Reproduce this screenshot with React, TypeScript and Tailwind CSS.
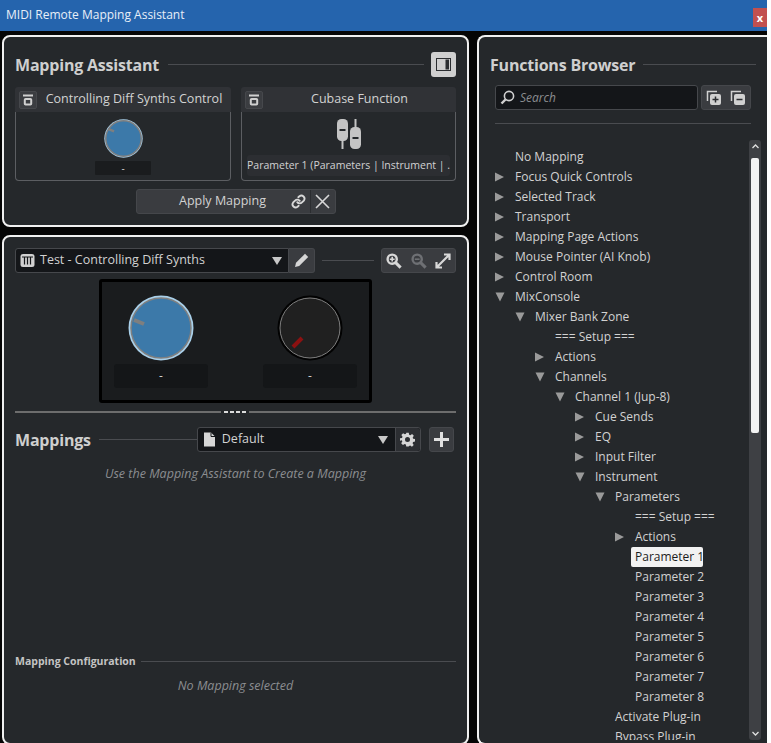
import React from "react";

type Row = { t: string; l: number; a?: "r" | "d"; s?: boolean };
const rows: Row[] = [
  { t: "No Mapping", l: 0 },
  { t: "Focus Quick Controls", l: 0, a: "r" },
  { t: "Selected Track", l: 0, a: "r" },
  { t: "Transport", l: 0, a: "r" },
  { t: "Mapping Page Actions", l: 0, a: "r" },
  { t: "Mouse Pointer (AI Knob)", l: 0, a: "r" },
  { t: "Control Room", l: 0, a: "r" },
  { t: "MixConsole", l: 0, a: "d" },
  { t: "Mixer Bank Zone", l: 1, a: "d" },
  { t: "=== Setup ===", l: 2 },
  { t: "Actions", l: 2, a: "r" },
  { t: "Channels", l: 2, a: "d" },
  { t: "Channel 1 (Jup-8)", l: 3, a: "d" },
  { t: "Cue Sends", l: 4, a: "r" },
  { t: "EQ", l: 4, a: "r" },
  { t: "Input Filter", l: 4, a: "r" },
  { t: "Instrument", l: 4, a: "d" },
  { t: "Parameters", l: 5, a: "d" },
  { t: "=== Setup ===", l: 6 },
  { t: "Actions", l: 6, a: "r" },
  { t: "Parameter 1", l: 6, s: true },
  { t: "Parameter 2", l: 6 },
  { t: "Parameter 3", l: 6 },
  { t: "Parameter 4", l: 6 },
  { t: "Parameter 5", l: 6 },
  { t: "Parameter 6", l: 6 },
  { t: "Parameter 7", l: 6 },
  { t: "Parameter 8", l: 6 },
  { t: "Activate Plug-in", l: 5 },
  { t: "Bypass Plug-in", l: 5 },
];

const Caret = () => (
  <svg width="10" height="8" viewBox="0 0 10 8" className="shrink-0"><path d="M0 0h10L5 8z" fill="#c8c8c8" /></svg>
);

const Rule = ({ className = "" }: { className?: string }) => <div className={"h-px bg-[#4a4c50] " + className} />;

const StoreIcon = () => (
  <div className="w-[18px] h-[18px] rounded-[2px] bg-[#3b3d41] border border-[#46484c] flex items-center justify-center shrink-0">
    <svg width="12" height="12" viewBox="0 0 12 12" fill="none">
      <path d="M1 1.5h10" stroke="#d0d0d0" strokeWidth="2" />
      <rect x="2.8" y="5" width="6.4" height="5.6" rx="0.8" stroke="#d0d0d0" strokeWidth="2" />
    </svg>
  </div>
);

const Knob = ({ size, ring, ringW, fill, mark, x1, y1, x2, y2 }: { size: number; ring: string; ringW: number; fill: string; mark: string; x1: number; y1: number; x2: number; y2: number }) => (
  <svg width={size} height={size} viewBox="0 0 66 66" className="shrink-0">
    <circle cx="33" cy="33" r="32.5" fill={ring} />
    <circle cx="33" cy="33" r={30} fill={fill} stroke="#808080" strokeWidth={ringW} />
    <line x1={x1} y1={y1} x2={x2} y2={y2} stroke={mark} strokeWidth="4" />
  </svg>
);

const Zoom = ({ color, plus }: { color: string; plus?: boolean }) => (
  <svg width="16" height="16" viewBox="0 0 16 16" fill="none">
    <circle cx="6.2" cy="6.2" r="4.6" stroke={color} strokeWidth="2.4" />
    <path d="M9.6 9.6L14.6 14.6" stroke={color} strokeWidth="3" />
    <path d={plus ? "M3.8 6.2h4.8M6.2 3.8v4.8" : "M3.8 6.2h4.8"} stroke={color} strokeWidth="1.6" />
  </svg>
);

export default function App() {
  return (
    <div className="w-[767px] h-[743px] overflow-hidden bg-[#050505] flex flex-col font-['Open_Sans',sans-serif] text-[12px] text-[#d2d2d2]">
      <div className="h-[31px] shrink-0 bg-[#2564ad] flex items-center justify-between pl-[6px]">
        <span className="text-[#e8eff8] text-[12px] leading-none mb-[1px]">MIDI Remote Mapping Assistant</span>
        <div className="w-[14px] h-[19px] mt-[4px] bg-[#c2504f] text-white font-bold text-[11px] flex items-center justify-center leading-none">x</div>
      </div>
      <div className="flex pt-[4px] pl-[2px] gap-[8px] flex-1 min-h-0">
        <div className="w-[467px] shrink-0 flex flex-col gap-[8px]">
          {/* Mapping Assistant */}
          <section className="h-[192px] shrink-0 border-2 border-[#f0f0f0] rounded-[8px] bg-[#25282b] px-[11px] pt-[15px]">
            <div className="flex items-center h-[25px]">
              <h2 className="text-[16px] font-bold text-[#cfcfcf] leading-none tracking-[-0.2px]">Mapping Assistant</h2>
              <Rule className="flex-1 ml-[9px] mr-[7px]" />
              <div className="w-[25px] h-[25px] rounded-[3px] bg-[#cfcfcf] flex items-center justify-center">
                <svg width="15" height="13" viewBox="0 0 15 13"><rect x="0.5" y="0.5" width="14" height="12" fill="none" stroke="#2b2d30" /><rect x="9.5" y="1.5" width="3.5" height="10" fill="#2b2d30" /></svg>
              </div>
            </div>
            <div className="flex gap-[10px] mt-[10px]">
              <div className="w-[216px] h-[94px] flex flex-col">
                <div className="h-[25px] bg-[#303236] rounded-t-[3px] flex items-center pl-[4px]">
                  <StoreIcon />
                  <span className="flex-1 text-center text-[12.5px] leading-none">Controlling Diff Synths Control</span>
                </div>
                <div className="flex-1 border-x border-b border-[#5c5e62] rounded-b-[4px] flex flex-col items-center pt-[7px]">
                  <Knob size={39} ring="#a9d0ea" ringW={2.5} fill="#3c79a9" mark="#7f7f7f" x1={8} y1={17} x2={17} y2={21} />
                  <div className="w-[56px] h-[14px] mt-[3px] bg-[#1a1c1e] rounded-[1px] text-center text-[10px] leading-[14px]">-</div>
                </div>
              </div>
              <div className="w-[215px] h-[94px] flex flex-col">
                <div className="h-[25px] bg-[#303236] rounded-t-[3px] flex items-center pl-[4px]">
                  <StoreIcon />
                  <span className="flex-1 text-center text-[12.5px] leading-none">Cubase Function</span>
                </div>
                <div className="flex-1 border-x border-b border-[#5c5e62] rounded-b-[4px] flex flex-col items-center pt-[7px]">
                  <svg width="26" height="31" viewBox="0 0 26 31" className="shrink-0">
                    <rect x="5.5" y="20" width="2" height="10" fill="#c4c4c4" />
                    <rect x="1" y="0" width="11" height="22" rx="4.5" fill="#c4c4c4" />
                    <rect x="3.5" y="10" width="6" height="2" fill="#25282b" />
                    <rect x="18.5" y="0" width="2" height="10" fill="#c4c4c4" />
                    <rect x="14" y="8" width="11" height="22" rx="4.5" fill="#c4c4c4" />
                    <rect x="16.5" y="18" width="6" height="2" fill="#25282b" />
                  </svg>
                  <div className="w-[203px] h-[21px] mt-[5px] bg-[#2c2e32] rounded-[3px] text-center text-[10.5px] leading-[21px] whitespace-nowrap overflow-hidden">Parameter 1 (Parameters | Instrument | .</div>
                </div>
              </div>
            </div>
            <div className="flex justify-center mt-[8px]">
              <div className="w-[200px] h-[25px] bg-[#3a3c40] border border-[#45474b] rounded-[3px] flex items-center">
                <span className="w-[151px] pl-[21px] text-center text-[12.5px] leading-none">Apply Mapping</span>
                <div className="flex-1 flex justify-center">
                  <svg width="15" height="15" viewBox="0 0 24 24" fill="none" stroke="#d8d8d8" strokeWidth="3" strokeLinecap="round"><path d="M10 13a5 5 0 0 0 7.5.5l3-3a5 5 0 0 0-7-7l-1.7 1.7" /><path d="M14 11a5 5 0 0 0-7.5-.5l-3 3a5 5 0 0 0 7 7l1.7-1.7" /></svg>
                </div>
                <div className="w-[25px] h-full border-l border-[#2b2d30] flex items-center justify-center">
                  <svg width="15" height="15" viewBox="0 0 15 15" stroke="#d8d8d8" strokeWidth="1.6"><path d="M1 1l13 13M14 1L1 14" /></svg>
                </div>
              </div>
            </div>
          </section>

          {/* Surface panel */}
          <section className="flex-1 min-h-0 border-2 border-[#f0f0f0] rounded-[8px] bg-[#25282b] px-[11px] pt-[11px] overflow-hidden -mb-[2px]">
            <div className="flex items-center h-[25px]">
              <div className="w-[274px] h-full bg-[#141619] border border-[#46484c] rounded-l-[3px] flex items-center pl-[4px] pr-[6px]">
                <svg width="15" height="15" viewBox="0 0 15 15" className="shrink-0"><rect x="0.5" y="1" width="14" height="13" rx="2.5" fill="#d0d0d0" /><path d="M2 4h11" stroke="#141619" /><path d="M4.5 4v7.5M7.5 4v7.5M10.5 4v7.5" stroke="#141619" strokeWidth="1.2" /></svg>
                <span className="flex-1 ml-[5px] text-[12.5px] leading-none">Test - Controlling Diff Synths</span>
                <Caret />
              </div>
              <div className="w-[26px] h-full bg-[#3a3c40] border border-[#45474b] border-l-0 rounded-r-[3px] flex items-center justify-center">
                <svg width="15" height="15" viewBox="0 0 15 15"><path d="M11 0.8l3.2 3.2-9 9L1 14l1-4.2z" fill="#d6d6d6" /></svg>
              </div>
              <Rule className="w-[52px] ml-[7px] mr-[7px]" />
              <div className="w-[75px] h-full bg-[#3a3c40] border border-[#45474b] rounded-[3px] flex items-center justify-between pl-[4px] pr-[4px]">
                <Zoom color="#d8d8d8" plus />
                <Zoom color="#6e7074" />
                <svg width="16" height="16" viewBox="0 0 16 16" fill="none" stroke="#d8d8d8" strokeWidth="2.2"><path d="M9 1.5h5.5V7M14 2L2 14M7 14.5H1.5V9" /></svg>
              </div>
            </div>
            <div className="w-[273px] h-[124px] ml-[84px] mt-[6px] bg-[#1a1c1e] border-[3px] border-black rounded-[3px] flex justify-between px-[12px] pt-[13px]">
              {[0, 1].map((i) => (
                <div key={i} className="w-[94px] flex flex-col items-center">
                  {i === 0 ? (
                    <Knob size={66} ring="#a9d0ea" ringW={1.5} fill="#3c79a9" mark="#7f7f7f" x1={6} y1={25} x2={16} y2={29} />
                  ) : (
                    <Knob size={66} ring="#020202" ringW={1} fill="#202020" mark="#8c1111" x1={16} y1={52} x2={25} y2={43} />
                  )}
                  <div className="w-[94px] h-[24px] mt-[3px] rounded-[3px] bg-[#141618] text-center text-[12px] leading-[24px]">-</div>
                </div>
              ))}
            </div>
            <div className="flex items-center gap-[2px] mt-[8px] h-[2px]">
              <div className="w-[206px] h-[2px] bg-[#6d6d6d]" />
              <div className="w-[24px] flex justify-between px-[1px]">
                <div className="w-[4px] h-[2px] bg-[#dcdcdc]" />
                <div className="w-[4px] h-[2px] bg-[#dcdcdc]" />
                <div className="w-[4px] h-[2px] bg-[#dcdcdc]" />
                <div className="w-[4px] h-[2px] bg-[#dcdcdc]" />
              </div>
              <div className="flex-1 h-[2px] bg-[#6d6d6d]" />
            </div>
            <div className="flex items-center h-[25px] mt-[14px]">
              <h2 className="text-[16px] font-bold text-[#cfcfcf] leading-none tracking-[-0.2px]">Mappings</h2>
              <Rule className="w-[98px] ml-[8px]" />
              <div className="w-[224px] h-full bg-[#141619] border border-[#46484c] rounded-[3px] flex items-center pl-[5px]">
                <svg width="13" height="15" viewBox="0 0 13 15" className="shrink-0"><path d="M1 0.5h7l4 4v10H1z" fill="#d6d6d6" /><path d="M8 0.5v4h4" fill="none" stroke="#141619" /></svg>
                <span className="flex-1 ml-[6px] text-[12.5px] leading-none">Default</span>
                <div className="mr-[7px]"><Caret /></div>
                <div className="w-[25px] h-full border-l border-[#46484c] bg-[#2c2e32] rounded-r-[3px] flex items-center justify-center">
                  <svg width="15" height="15" viewBox="0 0 24 24"><path fillRule="evenodd" fill="#d6d6d6" d="M10 1h4l.6 3.2 2 .8 2.7-1.8 2.8 2.8-1.8 2.7.8 2 3 .6v4l-3.200.6-.8 2 1.800 2.700-2.800 2.800-2.700-1.800-2 .8L14 23h-4l-.6-3.200-2-.8-2.700 1.800-2.800-2.800 1.800-2.700-.8-2L0 14v-4l3.200-.6.8-2-1.800-2.700 2.800-2.800 2.700 1.800 2-.8zM12 8a4 4 0 1 0 0 8 4 4 0 0 0 0-8z" /></svg>
                </div>
              </div>
              <div className="w-[25px] h-full ml-[8px] bg-[#3a3c40] border border-[#45474b] rounded-[3px] flex items-center justify-center">
                <svg width="15" height="15" viewBox="0 0 15 15"><path d="M6 0h3v6h6v3H9v6H6V9H0V6h6z" fill="#e0e0e0" /></svg>
              </div>
            </div>
            <p className="text-center italic text-[#8b8d90] text-[12.5px] leading-none mt-[16px]">Use the Mapping Assistant to Create a Mapping</p>
            <div className="flex items-center mt-[174px] h-[14px]">
              <h3 className="text-[10.5px] font-bold text-[#c4c4c4] leading-none">Mapping Configuration</h3>
              <Rule className="flex-1 ml-[5px]" />
            </div>
            <p className="text-center italic text-[#8b8d90] text-[12.5px] leading-none mt-[11px]">No Mapping selected</p>
          </section>
        </div>

        {/* Functions Browser */}
        <section className="flex-1 min-w-0 border-2 border-r-0 border-[#f0f0f0] rounded-l-[8px] bg-[#25282b] pl-[11px] pr-[6px] pt-[15px] flex flex-col overflow-hidden -mb-[2px]">
          <div className="flex items-center h-[25px] pr-[5px]">
            <h2 className="text-[16px] font-bold text-[#cfcfcf] leading-none tracking-[-0.2px]">Functions Browser</h2>
            <Rule className="flex-1 ml-[8px]" />
          </div>
          <div className="flex items-center h-[25px] mt-[8px] ml-[5px] mr-[10px] gap-[3px]">
            <div className="flex-1 h-full bg-[#141619] border border-[#46484c] rounded-[3px] flex items-center pl-[4px]">
              <svg width="15" height="15" viewBox="0 0 15 15" fill="none" stroke="#d0d0d0"><circle cx="9" cy="6" r="4.6" strokeWidth="1.6" /><path d="M5.500 9.500L1.500 13.500" strokeWidth="2.4" /></svg>
              <span className="ml-[5px] italic text-[#8b8d90] text-[12px] leading-none">Search</span>
            </div>
            <div className="w-[50px] h-full bg-[#3a3c40] border border-[#45474b] rounded-[3px] flex items-center justify-between px-[4px]">
              <svg width="16" height="16" viewBox="0 0 16 16"><path d="M1.500 11V1.500H11" fill="none" stroke="#d0d0d0" strokeWidth="1.500" /><rect x="4" y="4" width="11" height="11" rx="2" fill="#d0d0d0" /><path d="M6.500 9.500h6M9.500 6.500v6" stroke="#2b2d30" strokeWidth="1.500" /></svg>
              <svg width="16" height="16" viewBox="0 0 16 16"><path d="M1.500 11V1.500H11" fill="none" stroke="#d0d0d0" strokeWidth="1.500" /><rect x="4" y="4" width="11" height="11" rx="2" fill="#d0d0d0" /><path d="M6.500 9.500h6" stroke="#2b2d30" strokeWidth="1.500" /></svg>
            </div>
          </div>
          <Rule className="mt-[13px] ml-[5px] mr-[10px] shrink-0" />
          <div className="flex flex-1 min-h-0 mt-[16px] mb-[3px]">
            <div className="flex-1 min-w-0 overflow-hidden pt-[7px] ml-[5px]">
              {rows.map((r, i) => (
                <div key={i} className="h-5 flex items-center relative" style={{ paddingLeft: 20 * r.l }}>
                  <span className="w-[20px] shrink-0 flex items-center">
                    {r.a === "r" && <svg width="10" height="10" viewBox="0 0 10 10"><path d="M0 0.500L9 5 0 9.500z" fill="#9a9a9a" /></svg>}
                    {r.a === "d" && <svg width="10" height="10" viewBox="0 0 10 10"><path d="M0.500 0.500h9L5 9.500z" fill="#9a9a9a" /></svg>}
                  </span>
                  <span className={r.s ? "bg-[#f2f2f2] text-[#1c1c1c] rounded-[2px] h-5 leading-5 px-[4px] -ml-[4px] w-[72px] whitespace-nowrap" : "whitespace-nowrap leading-5"}>{r.t}</span>
                </div>
              ))}
            </div>
            <div className="w-[12px] shrink-0 bg-[#3e4044] rounded-[3px] flex flex-col items-center pt-[4px] pb-[4px]">
              <svg width="7" height="5" viewBox="0 0 7 5" fill="none" stroke="#e0e0e0" strokeWidth="1.300"><path d="M0.500 4L3.500 1l3 3" /></svg>
              <div className="w-[8px] h-[275px] mt-[9px] bg-[#f2f2f2] rounded-[2px]" />
              <div className="flex-1" />
              <svg width="7" height="5" viewBox="0 0 7 5" fill="none" stroke="#e0e0e0" strokeWidth="1.300"><path d="M0.500 1L3.500 4l3-3" /></svg>
            </div>
          </div>
        </section>
      </div>
    </div>
  );
}
